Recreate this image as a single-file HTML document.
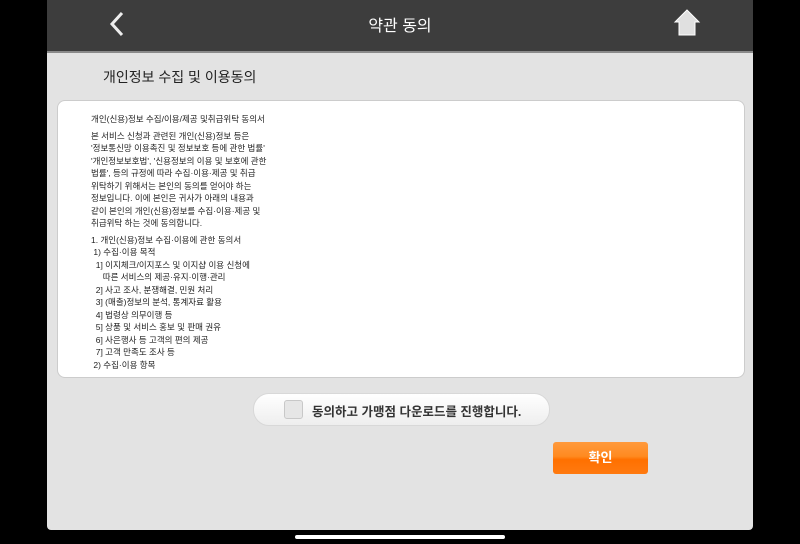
<!DOCTYPE html>
<html><head><meta charset="utf-8"><style>
body{margin:0;width:800px;height:544px;background:#000;position:relative;overflow:hidden;font-family:"Liberation Sans","Noto Sans CJK KR",sans-serif}
.app{position:absolute;left:47px;top:0;width:706px;height:530px;background:#e3e3e3;border-radius:0 0 4px 4px;overflow:hidden}
.hdr{position:absolute;left:0;top:0;width:706px;height:51px;background:#3d3d3d;border-bottom:2px solid #8a8a8a}
.hdr .t{position:absolute;left:0;right:0;top:12px;text-align:center;color:#fff;font-size:16px}
.ttl{position:absolute;left:56px;top:67px;font-size:14px;color:#222}
.box{position:absolute;left:10px;top:100px;width:686px;height:276px;background:#fff;border:1px solid #ccc;border-radius:8px}
.txt{position:absolute;left:33px;top:12px;font-size:8.5px;line-height:12.5px;color:#222;white-space:pre}
.pill{position:absolute;left:206px;top:393px;width:295px;height:31px;border-radius:16px;background:linear-gradient(#fff,#eee);border:1px solid #d8d8d8}
.cb{position:absolute;left:30px;top:6px;width:17px;height:17px;border:1px solid #c8c8c8;border-radius:3px;background:#e6e6e6}
.pill span{position:absolute;left:58px;top:7px;font-size:12.5px;font-weight:bold;color:#333}
.btn{position:absolute;left:506px;top:442px;width:95px;height:32px;border-radius:3px;background:linear-gradient(#ff9a3c,#ff8a20 45%,#ff7000 55%,#ff7a10);color:#fff;font-size:13px;font-weight:bold;text-align:center;line-height:32px}
.bar{position:absolute;left:295px;top:535px;width:210px;height:4px;background:#fff;border-radius:2px}
</style></head><body>
<div class="app">
<div class="hdr">
<svg style="position:absolute;left:60px;top:10px" width="20" height="28"><path d="M15 3 L5 14 L15 25" stroke="#eee" stroke-width="3" fill="none"/></svg>
<div class="t">약관 동의</div>
<svg style="position:absolute;left:626px;top:8px" width="28" height="28"><path d="M14 2 L26 14 L22 14 L22 27 L6 27 L6 14 L2 14 Z" fill="#e0e0e0" stroke="#fff" stroke-width="1"/></svg>
</div>
<div class="ttl">개인정보 수집 및 이용동의</div>
<div class="box"><div class="txt">개인(신용)정보 수집/이용/제공 및취급위탁 동의서
<span style="display:block;height:4px"></span>본 서비스 신청과 관련된 개인(신용)정보 등은
'정보통신망 이용촉진 및 정보보호 등에 관한 법률'
'개인정보보호법', '신용정보의 이용 및 보호에 관한
법률', 등의 규정에 따라 수집·이용·제공 및 취급
위탁하기 위해서는 본인의 동의를 얻어야 하는
정보입니다. 이에 본인은 귀사가 아래의 내용과
같이 본인의 개인(신용)정보를 수집·이용·제공 및
취급위탁 하는 것에 동의합니다.
<span style="display:block;height:4px"></span>1. 개인(신용)정보 수집·이용에 관한 동의서
 1) 수집·이용 목적
  1] 이지체크/이지포스 및 이지샵 이용 신청에
     따른 서비스의 제공·유지·이행·관리
  2] 사고 조사, 분쟁해결, 민원 처리
  3] (매출)정보의 분석, 통계자료 활용
  4] 법령상 의무이행 등
  5] 상품 및 서비스 홍보 및 판매 권유
  6] 사은행사 등 고객의 편의 제공
  7] 고객 만족도 조사 등
 2) 수집·이용 항목</div></div>
<div class="pill"><div class="cb"></div><span>동의하고 가맹점 다운로드를 진행합니다.</span></div>
<div class="btn">확인</div>
</div>
<div class="bar"></div>
</body></html>
